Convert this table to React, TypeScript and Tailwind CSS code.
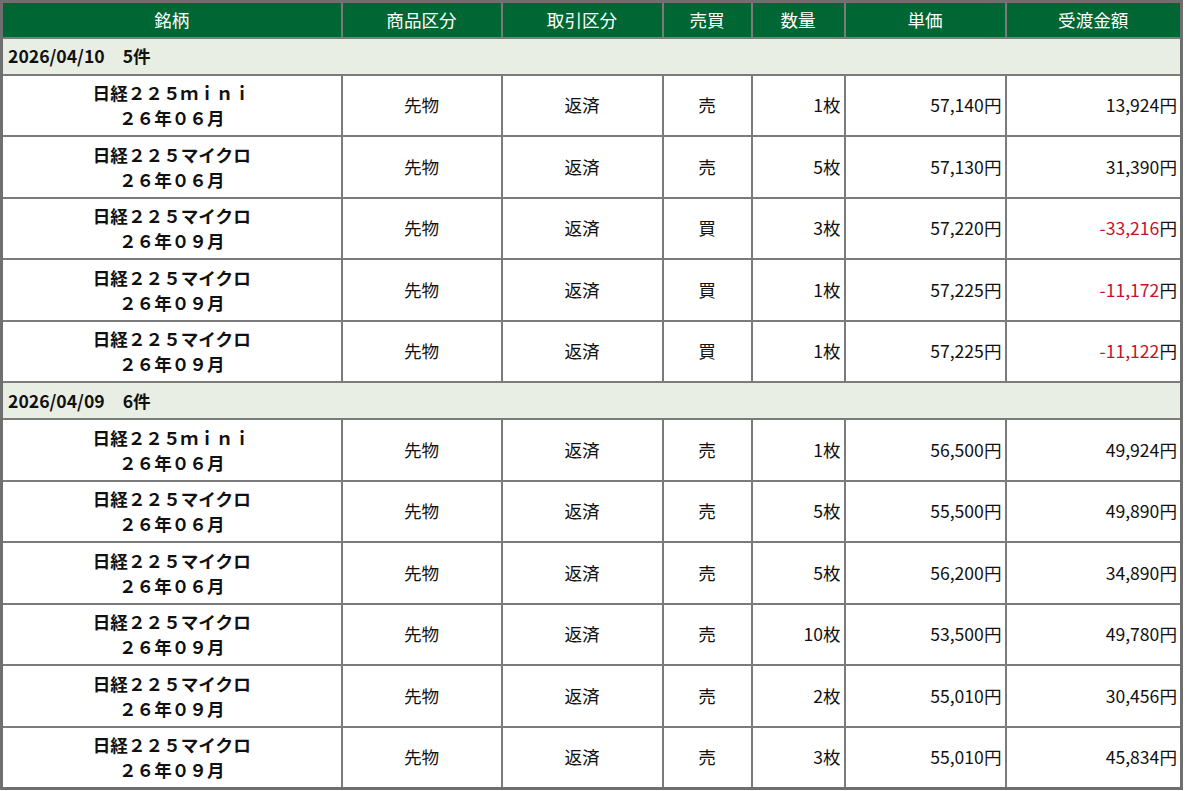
import React from 'react';

type Row = {
    name: string;
    month: string;
    kind: string;
    trade: string;
    side: string;
    qty: string;
    price: string;
    amount: string;
    minus?: boolean;
};

type Group = {
    date: string;
    count: string;
    rows: Row[];
};

const groups: Group[] = [
    {
        date: '2026/04/10',
        count: '5件',
        rows: [
            { name: '日経２２５ｍｉｎｉ', month: '２６年０６月', kind: '先物', trade: '返済', side: '売', qty: '1枚', price: '57,140', amount: '13,924' },
            { name: '日経２２５マイクロ', month: '２６年０６月', kind: '先物', trade: '返済', side: '売', qty: '5枚', price: '57,130', amount: '31,390' },
            { name: '日経２２５マイクロ', month: '２６年０９月', kind: '先物', trade: '返済', side: '買', qty: '3枚', price: '57,220', amount: '-33,216', minus: true },
            { name: '日経２２５マイクロ', month: '２６年０９月', kind: '先物', trade: '返済', side: '買', qty: '1枚', price: '57,225', amount: '-11,172', minus: true },
            { name: '日経２２５マイクロ', month: '２６年０９月', kind: '先物', trade: '返済', side: '買', qty: '1枚', price: '57,225', amount: '-11,122', minus: true },
        ],
    },
    {
        date: '2026/04/09',
        count: '6件',
        rows: [
            { name: '日経２２５ｍｉｎｉ', month: '２６年０６月', kind: '先物', trade: '返済', side: '売', qty: '1枚', price: '56,500', amount: '49,924' },
            { name: '日経２２５マイクロ', month: '２６年０６月', kind: '先物', trade: '返済', side: '売', qty: '5枚', price: '55,500', amount: '49,890' },
            { name: '日経２２５マイクロ', month: '２６年０６月', kind: '先物', trade: '返済', side: '売', qty: '5枚', price: '56,200', amount: '34,890' },
            { name: '日経２２５マイクロ', month: '２６年０９月', kind: '先物', trade: '返済', side: '売', qty: '10枚', price: '53,500', amount: '49,780' },
            { name: '日経２２５マイクロ', month: '２６年０９月', kind: '先物', trade: '返済', side: '売', qty: '2枚', price: '55,010', amount: '30,456' },
            { name: '日経２２５マイクロ', month: '２６年０９月', kind: '先物', trade: '返済', side: '売', qty: '3枚', price: '55,010', amount: '45,834' },
        ],
    },
];

const headers = ['銘柄', '商品区分', '取引区分', '売買', '数量', '単価', '受渡金額'];
const widths = ['w-[340px]', 'w-[160px]', 'w-[161px]', 'w-[89px]', 'w-[93px]', 'w-[161px]', 'w-[176px]'];

const cell = 'border-2 border-[#7b7b7b] h-[61.5px] text-[17.6px] text-[#111]';

export default function App() {
    return (
        <div className="bg-white min-h-screen font-['Noto_Sans_CJK_JP','Noto_Sans',sans-serif]">
            <table className="w-[1180px] border-collapse border-[3px] border-[#6f6f6f] table-fixed">
                <colgroup>
                    {widths.map((w, i) => (
                        <col key={i} className={w} />
                    ))}
                </colgroup>
                <thead>
                    <tr>
                        {headers.map((h) => (
                            <th key={h} className="border-2 border-[#7b7b7b] bg-[#006633] text-white font-normal text-[17.6px] h-[36px] text-center leading-none">
                                {h}
                            </th>
                        ))}
                    </tr>
                </thead>
                <tbody>
                    {groups.map((g) => (
                        <React.Fragment key={g.date}>
                            <tr>
                                <td colSpan={7} className="border-2 border-[#7b7b7b] bg-[#e9eee4] h-[37px] px-[5px] text-[17.6px] font-bold text-[#111] leading-none">
                                    {g.date}<span className="ml-[18px]">{g.count}</span>
                                </td>
                            </tr>
                            {g.rows.map((r, i) => (
                                <tr key={i}>
                                    <td className={`${cell} text-center font-bold leading-[25px]`}>
                                        <div>{r.name}</div>
                                        <div>{r.month}</div>
                                    </td>
                                    <td className={`${cell} text-center`}>{r.kind}</td>
                                    <td className={`${cell} text-center`}>{r.trade}</td>
                                    <td className={`${cell} text-center`}>{r.side}</td>
                                    <td className={`${cell} text-right pr-[3px]`}>{r.qty}</td>
                                    <td className={`${cell} text-right pr-[3px]`}>{r.price}円</td>
                                    <td className={`${cell} text-right pr-[3px]`}>
                                        <span className={r.minus ? 'text-[#c8102e]' : ''}>{r.amount}</span>円
                                    </td>
                                </tr>
                            ))}
                        </React.Fragment>
                    ))}
                </tbody>
            </table>
        </div>
    );
}
